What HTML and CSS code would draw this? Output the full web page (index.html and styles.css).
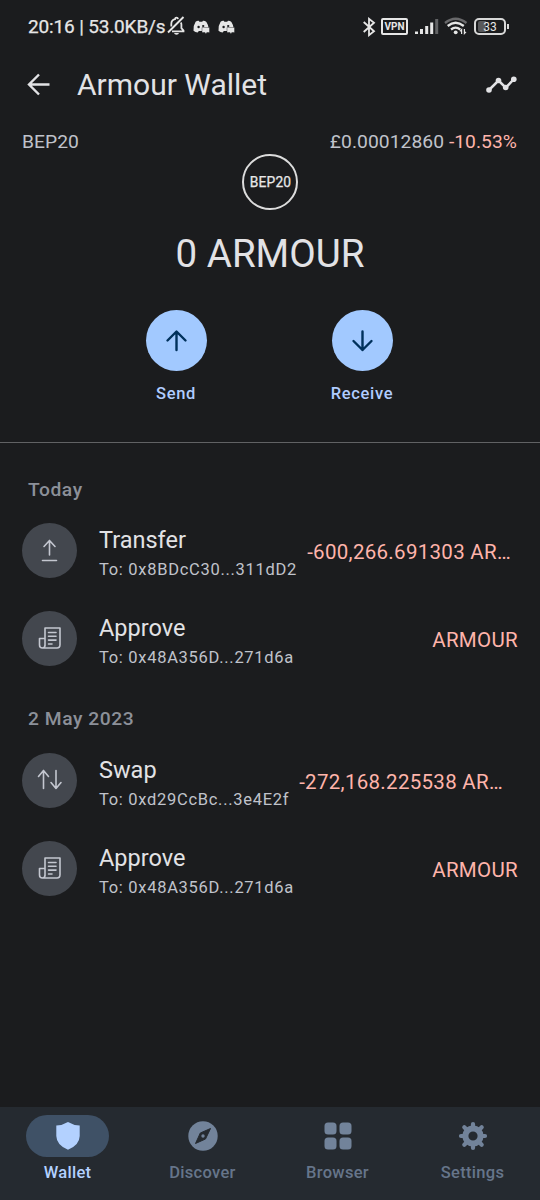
FILE: index.html
```html
<!DOCTYPE html>
<html lang="en">
<head>
<meta charset="utf-8">
<title>Armour Wallet</title>
<link rel="stylesheet" href="styles.css">
</head>
<body>
<svg class="defs" width="0" height="0">
  <symbol id="discord" viewBox="0 0 17 14">
    <path fill="#e6e6e6" d="M2.600 1.800Q4.200 .5 5.700.8L6.400 1.700H9.200L10 .8Q12 .7 13.400 1.900Q15.300 4.700 15.600 8H9V11H5.800L4.700 12.500Q2.300 12.100.5 10.700Q.1 5.600 2.600 1.800Z"/>
    <ellipse cx="5.600" cy="7" rx="1.200" ry="1.300" fill="#1b1c1e"/>
    <ellipse cx="10.200" cy="6" rx="1.200" ry="1" fill="#1b1c1e"/>
    <path d="M9 7.500H16.500V12.500H13.800L12.900 13.900L12 12.500H9Z" fill="#e6e6e6" stroke="#1b1c1e" stroke-width=".4"/>
  </symbol>
  <symbol id="document" viewBox="0 0 24 24">
    <path fill="none" stroke="#c4c7d0" stroke-width="1.600" stroke-linejoin="round" d="M7 20V2H22V18.500Q22 22 19 22H4.500Q1.500 22 1.500 19V12.500H7V19Q7 22 4.300 22"/>
    <path stroke="#c4c7d0" stroke-width="1.600" stroke-linecap="round" d="M10.500 6.500H18M10.500 10.300H18M10.500 14.100H18M10.500 18H14"/>
  </symbol>
</svg>
<div class="screen">
  <header class="status">
    <span class="clock">20:16 | 53.0KB/s</span>
    <svg class="bell" width="19" height="20" viewBox="0 0 19 20"><path fill="none" stroke="#e6e6e6" stroke-width="1.800" d="M4.300 10.500V8Q4.300 4.100 8 3.200Q8.200 1.700 9.500 1.700Q10.800 1.700 11 3.200M13.800 6.500Q14.400 7.500 14.400 8.500V12.200L16.500 14.700V15.300H5"/><path stroke="#e6e6e6" stroke-width="1.900" d="M1 16.500L16.500 1"/><path d="M7 17H12Q11.500 18.700 9.500 18.700Q7.500 18.700 7 17Z" fill="#e6e6e6"/></svg>
    <svg class="discord" width="17" height="14"><use href="#discord"/></svg>
    <svg class="discord second" width="17" height="14"><use href="#discord"/></svg>
    <div class="indicators">
      <svg width="14" height="20" viewBox="0 0 14 20"><path fill="none" stroke="#e6e6e6" stroke-width="1.800" d="M1.700 5L12 14.300L7 18.200V1.800L12 5.700L1.700 15"/></svg>
      <span class="vpn">VPN</span>
      <svg class="signal" width="25" height="17" viewBox="0 0 25 17"><path fill="#e6e6e6" d="M1 13.500H4V16H1ZM6 11H9V16H6ZM11.200 8H14.200V16H11.200ZM16.200 4.500H19.200V16H16.200Z"/><path fill="#626365" d="M21.200 1H24.200V16H21.200Z"/></svg>
      <svg class="wifi" width="24" height="19" viewBox="0 0 24 19"><g fill="none" stroke-width="2.300"><path stroke="#69696b" d="M1 6Q11.500-2.500 22.500 6"/><path stroke="#e6e6e6" d="M3.700 9Q11.500 2.500 19.800 9M7 12.500Q11.500 8.700 16.300 12.500"/></g><circle cx="11.700" cy="15.300" r="1.900" fill="#e6e6e6"/><path stroke="#e6e6e6" stroke-width="1.200" fill="none" d="M17.600 17V12.500L16 14.300M20.400 12V16.500L22 14.800"/></svg>
      <span class="battery"><span class="charge">33</span></span>
    </div>
  </header>
  <div class="appbar">
    <svg width="24" height="24" viewBox="0 0 24 24"><path fill="none" stroke="#e2e2e5" stroke-width="2.400" d="M22.500 11.500H2.500M12 1.500L2 11.500L12 21.500"/></svg>
    <h1>Armour Wallet</h1>
    <svg class="chart" width="32" height="20" viewBox="0 0 32 20"><path fill="none" stroke="#e2e2e5" stroke-width="2.500" d="M4 15L13.500 5.500L20.800 12.700L29 4"/><g fill="#e2e2e5"><circle cx="4" cy="15" r="2.800"/><circle cx="13.500" cy="5.500" r="2.800"/><circle cx="20.700" cy="12.500" r="2.800"/><circle cx="28.800" cy="4.200" r="2.800"/></g></svg>
  </div>
  <div class="info"><span>BEP20</span><span class="price">£0.00012860 <span class="loss">-10.53%</span></span></div>
  <div class="token">BEP20</div>
  <div class="balance">0 ARMOUR</div>
  <div class="actions">
    <div class="action"><span class="round"><svg width="24" height="24" viewBox="0 0 24 24"><path class="arrow" d="M12.500 21V3M3.500 11.500L12.500 2.500L21.500 11.500"/></svg></span><span>Send</span></div>
    <div class="action"><span class="round"><svg width="24" height="24" viewBox="0 0 24 24"><path class="arrow" d="M12.500 2.500V21M3.500 12L12.500 21L21.500 12"/></svg></span><span>Receive</span></div>
  </div>
  <main class="history">
    <h2>Today</h2>
    <div class="row">
      <span class="avatar"><svg width="24" height="24" viewBox="0 0 24 24"><path class="thin" d="M11.500 17V2.500M6 8.500L11.500 2.500L17 8.500M4.500 22.500H18.500"/></svg></span>
      <div class="detail"><b>Transfer</b><small>To: 0x8BDcC30...311dD2</small></div>
      <span class="amount clipped">-600,266.691303 AR…</span>
    </div>
    <div class="row">
      <span class="avatar"><svg width="24" height="24"><use href="#document"/></svg></span>
      <div class="detail"><b>Approve</b><small>To: 0x48A356D...271d6a</small></div>
      <span class="amount">ARMOUR</span>
    </div>
    <h2 class="later">2 May 2023</h2>
    <div class="row">
      <span class="avatar"><svg width="26" height="24" viewBox="0 0 26 24"><path class="thin" d="M6.500 20.500V2.500M1.500 8.500L6.500 2.500L11.500 8.500M19 2.500V20.500M14 14.500L19 20.500L24 14.500"/></svg></span>
      <div class="detail"><b>Swap</b><small>To: 0xd29CcBc...3e4E2f</small></div>
      <span class="amount clipped wide">-272,168.225538 AR…</span>
    </div>
    <div class="row">
      <span class="avatar"><svg width="24" height="24"><use href="#document"/></svg></span>
      <div class="detail"><b>Approve</b><small>To: 0x48A356D...271d6a</small></div>
      <span class="amount">ARMOUR</span>
    </div>
  </main>
  <nav class="tabs">
    <div class="tab active"><span class="pill"><svg width="24" height="28" viewBox="0 0 24 28"><path fill="#b3d1ff" d="M12 0Q17.500 3.400 23.700 3.500V14Q23.500 23 12 27.800Q.5 23 .3 14V3.500Q6.500 3.400 12 0Z"/></svg></span><span>Wallet</span></div>
    <div class="tab"><span class="pill"><svg width="30" height="30" viewBox="0 0 30 30"><circle cx="15" cy="15" r="14.700" fill="#72839a"/><path fill="#252a30" d="M22.500 7.500L17.500 18L7.500 22.500L12.300 12Z" stroke="#252a30" stroke-linejoin="round"/><circle cx="15" cy="15" r="1.700" fill="#72839a"/></svg></span><span>Discover</span></div>
    <div class="tab"><span class="pill"><svg width="28" height="28" viewBox="0 0 28 28" fill="#72839a"><rect x=".5" y=".5" width="12" height="12" rx="3.500"/><rect x="15.500" y=".5" width="12" height="12" rx="3.500"/><rect x=".5" y="15.500" width="12" height="12" rx="3.500"/><rect x="15.500" y="15.500" width="12" height="12" rx="3.500"/></svg></span><span>Browser</span></div>
    <div class="tab"><span class="pill"><svg width="30" height="30" viewBox="-15 -15 30 30"><circle r="7.600" fill="none" stroke="#72839a" stroke-width="6"/><g stroke="#72839a" stroke-width="4.200" stroke-linecap="round"><path d="M0-9V-12M0 9V12M-9 0H-12M9 0H12M-6.500-6.500L-8.700-8.700M6.500-6.500L8.700-8.700M-6.500 6.500L-8.700 8.700M6.500 6.500L8.700 8.700"/></g></svg></span><span>Settings</span></div>
  </nav>
</div>
</body>
</html>
```
FILE: styles.css
```css
* { box-sizing: border-box; }
body { margin: 0; background: #1b1c1e; font-family: Roboto, sans-serif; color: #e2e2e5; }
svg { display: block; flex: none; }
.defs { position: absolute; }
.screen { width: 540px; height: 1200px; display: flex; flex-direction: column; overflow: hidden; }
.status { height: 53px; display: flex; align-items: center; padding: 0 31px 0 28px; color: #e6e6e6; }
.clock { font-size: 19px; line-height: 24px; width: 139px; letter-spacing: -.15px; white-space: nowrap; -webkit-text-stroke: .25px; }
.bell { margin-top: -1px; }
.discord { margin-left: 7px; }
.second { margin-left: 8px; }
.indicators { margin-left: auto; display: flex; align-items: center; }
.indicators > :first-child { margin-right: -1px; }
.vpn { width: 27px; height: 17px; margin-left: 6px; border: 2px solid #e6e6e6; border-radius: 2px; font-size: 10px; font-weight: 700; line-height: 14px; text-align: center; }
.signal { margin-left: 6px; }
.wifi { margin-left: 5px; }
.battery { position: relative; width: 32px; height: 17px; margin: 0 3px 0 6px; padding: 1px 2px; border: 2px solid #d8d8d8; border-radius: 5px; }
.battery::after { content: ""; position: absolute; right: -5px; top: 4px; width: 2px; height: 5px; background: #d8d8d8; }
.charge { display: block; height: 11px; line-height: 12px; font-size: 12px; text-align: center; background: linear-gradient(90deg, #58595b 8px, transparent 8px); border-radius: 2px; }
.appbar { height: 64px; display: flex; align-items: center; padding: 0 23px 0 27px; }
h1 { margin: 0 0 0 26px; font-size: 30px; font-weight: 400; line-height: 36px; }
.chart { margin-left: auto; }
.info { height: 24px; margin-top: 13px; padding: 0 23px 0 22px; display: flex; justify-content: space-between; font-size: 19.250px; line-height: 24px; letter-spacing: .05px; color: #c0c3cb; }
.loss, .amount { color: #ffb4ab; }
.token { width: 56px; height: 56px; margin: 0 auto; border: 2px solid #dcdcdc; border-radius: 50%; font-size: 13.800px; line-height: 53px; text-indent: 1px; text-align: center; -webkit-text-stroke: .25px; letter-spacing: .2px; color: #e8e8e8; }
.balance { height: 48px; margin-top: 20px; text-align: center; font-size: 38.500px; line-height: 48px; }
.actions { height: 165px; padding: 32px 85px 0 83px; display: grid; grid-template-columns: 1fr 1fr; border-bottom: 1px solid #616264; }
.action { display: flex; flex-direction: column; align-items: center; font-size: 16.500px; line-height: 20px; letter-spacing: .65px; font-weight: 500; color: #b0ccff; }
.round { width: 61px; height: 61px; margin-bottom: 13px; border-radius: 50%; background: #a2c9ff; display: grid; place-items: center; }
.arrow { fill: none; stroke: #00315c; stroke-width: 2.400; stroke-linecap: round; stroke-linejoin: round; }
.history { flex: 1; padding: 28px 22px 0; }
h2 { margin: 0 6px; height: 35px; font-size: 19.250px; font-weight: 500; line-height: 37px; letter-spacing: .55px; color: #8c9099; }
.later { margin-top: 18px; height: 36px; }
.row { height: 88px; display: flex; align-items: center; }
.avatar { width: 55px; height: 55px; border-radius: 50%; background: #43474e; display: grid; place-items: center; }
.thin { fill: none; stroke: #c4c7d0; stroke-width: 1.600; stroke-linecap: round; stroke-linejoin: round; }
.detail { margin-left: 22px; padding-top: 5px; white-space: nowrap; }
.detail b { display: block; font-size: 23.500px; font-weight: 400; line-height: 30px; }
.detail small { display: block; font-size: 16.500px; line-height: 22px; margin-top: 4px; letter-spacing: .7px; color: #c0c3cb; }
.amount { margin-left: auto; padding-top: 3px; font-size: 20.500px; line-height: 26px; letter-spacing: .3px; white-space: nowrap; }
.clipped { margin-right: 7px; }
.wide { margin-right: 15px; }
.tabs { height: 93px; padding-top: 8px; display: grid; grid-template-columns: repeat(4, 1fr); background: #252a30; }
.tab { display: flex; flex-direction: column; align-items: center; font-size: 16.500px; line-height: 20px; letter-spacing: .3px; font-weight: 500; color: #66758a; }
.pill { width: 83px; height: 42px; margin-bottom: 6px; border-radius: 21px; display: grid; place-items: center; }
.active { color: #b3d1ff; }
.active .pill { background: #3f5166; }
```
